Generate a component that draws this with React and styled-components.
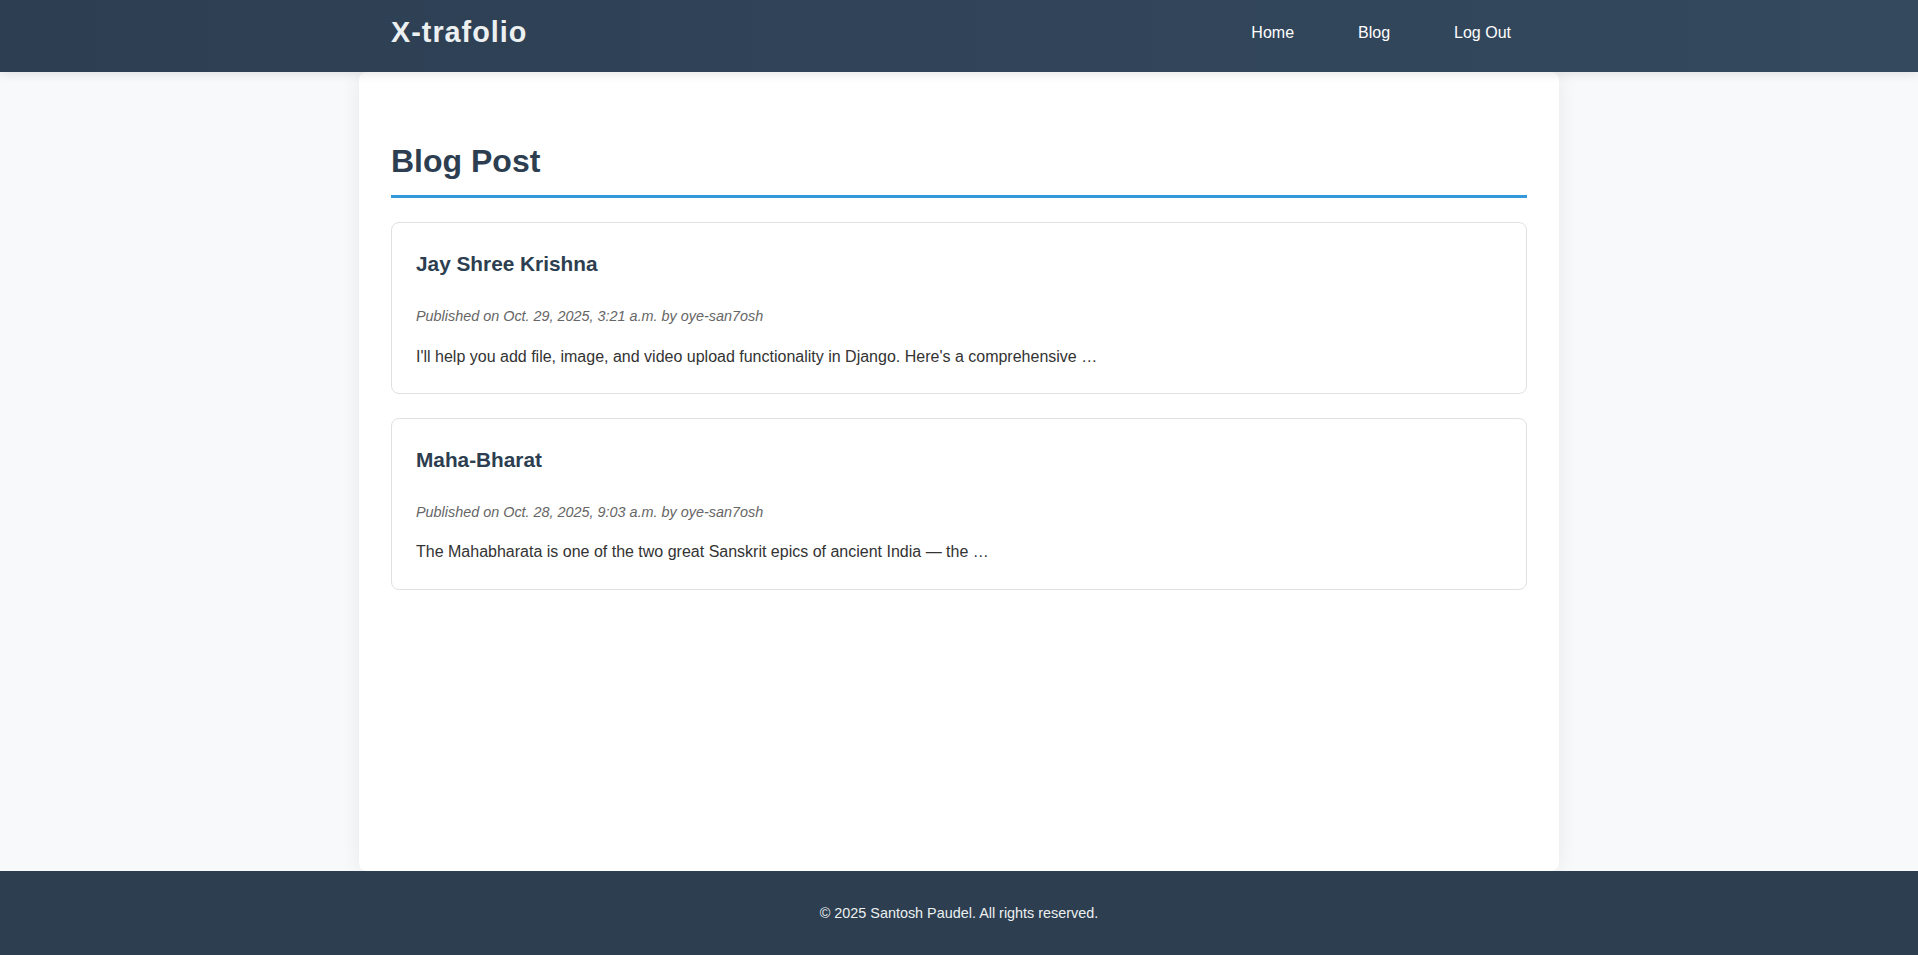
import React from "react";
import styled, { createGlobalStyle } from "styled-components";

const GlobalStyle = createGlobalStyle`
	* {
		box-sizing: border-box;
	}
	body {
		margin: 0;
		background-color: #f8f9fa;
		font-family: "Liberation Sans", Arial, sans-serif;
		line-height: 1.6;
		color: #333;
	}
`;

const posts = [
	{
		id: 1,
		title: "Jay Shree Krishna",
		date: "Oct. 29, 2025, 3:21 a.m.",
		author: "oye-san7osh",
		excerpt: "I'll help you add file, image, and video upload functionality in Django. Here's a comprehensive …"
	},
	{
		id: 2,
		title: "Maha-Bharat",
		date: "Oct. 28, 2025, 9:03 a.m.",
		author: "oye-san7osh",
		excerpt: "The Mahabharata is one of the two great Sanskrit epics of ancient India — the …"
	}
];

const Page = styled.div`
	display: flex;
	flex-direction: column;
	min-height: 100vh;
`;

const Header = styled.header`
	position: relative;
	z-index: 2;
	height: 72px;
	background: linear-gradient(90deg, #2d3e52, #34495e);
	box-shadow: 0 2px 10px rgba(0, 0, 0, 0.1);
`;

const HeaderInner = styled.div`
	display: flex;
	align-items: center;
	justify-content: space-between;
	max-width: 1200px;
	height: 100%;
	margin: 0 auto;
	padding: 0 32px 7px;
`;

const Logo = styled.div`
	font-size: 28.8px;
	font-weight: bold;
	line-height: 1.15;
	letter-spacing: 1px;
	color: #ecf0f1;
`;

const Nav = styled.nav`
	display: flex;
	gap: 32px;
`;

const NavLink = styled.a`
	padding: 8px 16px;
	font-size: 16px;
	color: #fff;
	text-decoration: none;
	cursor: pointer;
	&:hover {
		color: #3498db;
	}
`;

const Main = styled.main`
	flex: 1;
	width: 100%;
	max-width: 1200px;
	margin: 0 auto;
	padding: 32px;
	background-color: #fff;
	border-radius: 8px;
	box-shadow: 0 0 20px rgba(0, 0, 0, 0.07);
`;

const PageTitle = styled.h2`
	margin: 32px 0 24px;
	padding-bottom: 8px;
	font-size: 32px;
	font-weight: bold;
	color: #2c3e50;
	border-bottom: 3px solid #3498db;
`;

const Card = styled.article`
	margin-bottom: 24px;
	padding: 24px;
	border: 1px solid #e0e0e0;
	border-radius: 8px;
	background-color: #fff;
`;

const CardTitle = styled.h3`
	margin: 0 0 25px;
	font-size: 20.8px;
	font-weight: bold;
	color: #2c3e50;
`;

const Meta = styled.p`
	margin: 0 0 15px;
	font-size: 14.4px;
	font-style: italic;
	color: #666;
`;

const Excerpt = styled.p`
	margin: 0;
	font-size: 16px;
	color: #333;
`;

const Footer = styled.footer`
	padding: 31px 0 30px;
	background-color: #2c3e50;
	text-align: center;
	p {
		margin: 0;
		font-size: 14.4px;
		color: #ecf0f1;
	}
`;

export default function App() {
	return (
		<Page>
			<GlobalStyle />
			<Header>
				<HeaderInner>
					<Logo>X-trafolio</Logo>
					<Nav>
						<NavLink>Home</NavLink>
						<NavLink>Blog</NavLink>
						<NavLink>Log Out</NavLink>
					</Nav>
				</HeaderInner>
			</Header>
			<Main>
				<PageTitle>Blog Post</PageTitle>
				{posts.map(post => (
					<Card key={post.id}>
						<CardTitle>{post.title}</CardTitle>
						<Meta>
							Published on {post.date} by {post.author}
						</Meta>
						<Excerpt>{post.excerpt}</Excerpt>
					</Card>
				))}
			</Main>
			<Footer>
				<p>© 2025 Santosh Paudel. All rights reserved.</p>
			</Footer>
		</Page>
	);
}
